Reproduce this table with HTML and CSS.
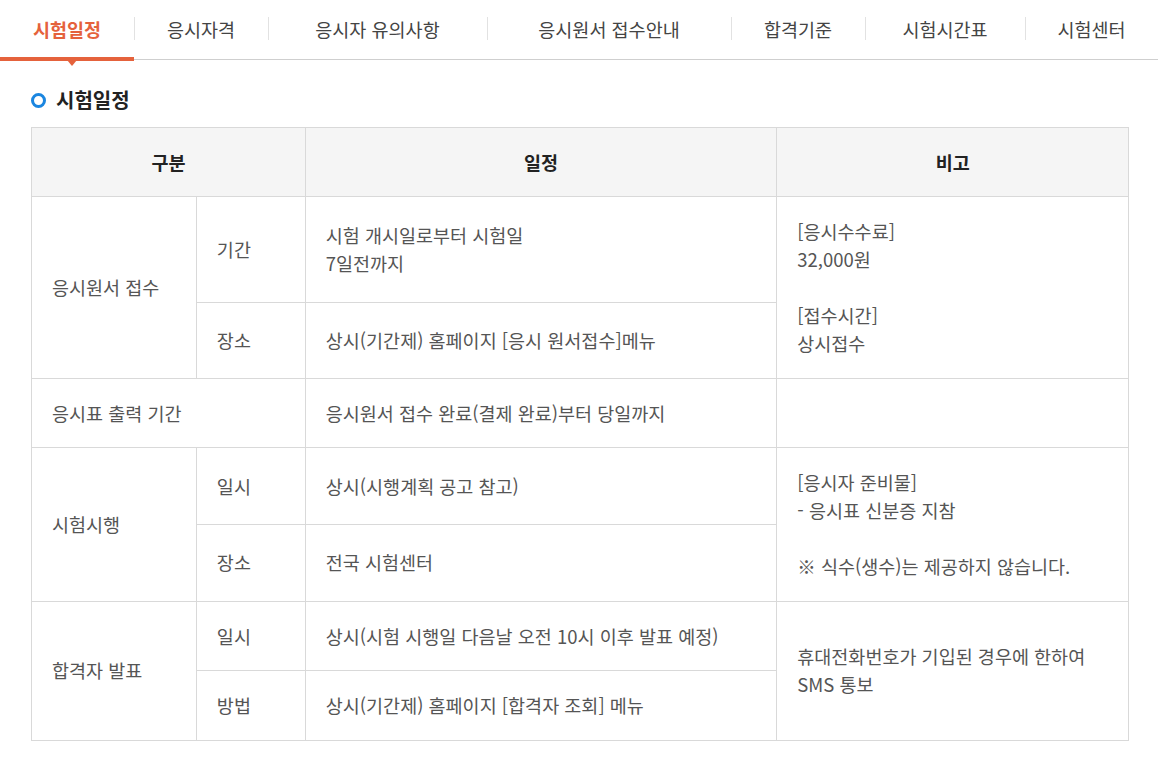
FILE: index.html
```html
<!DOCTYPE html>
<html lang="ko">
<head>
<meta charset="utf-8">
<title>시험일정</title>
<link rel="stylesheet" href="styles.css">
</head>
<body>
<nav class="tabs">
  <a class="tab active">시험일정</a>
  <a class="tab">응시자격</a>
  <a class="tab">응시자 유의사항</a>
  <a class="tab">응시원서 접수안내</a>
  <a class="tab">합격기준</a>
  <a class="tab">시험시간표</a>
  <a class="tab">시험센터</a>
</nav>
<main class="content">
  <h2 class="title"><span class="ring"></span>시험일정</h2>
  <table class="sched">
    <colgroup>
      <col class="c1"><col class="c2"><col class="c3"><col class="c4">
    </colgroup>
    <thead>
      <tr><th colspan="2">구분</th><th>일정</th><th>비고</th></tr>
    </thead>
    <tbody>
      <tr>
        <td rowspan="2">응시원서 접수</td>
        <td>기간</td>
        <td>시험 개시일로부터 시험일<br>7일전까지</td>
        <td rowspan="2">[응시수수료]<br>32,000원<br><br>[접수시간]<br>상시접수</td>
      </tr>
      <tr>
        <td>장소</td>
        <td>상시(기간제) 홈페이지 [응시 원서접수]메뉴</td>
      </tr>
      <tr>
        <td colspan="2">응시표 출력 기간</td>
        <td>응시원서 접수 완료(결제 완료)부터 당일까지</td>
        <td></td>
      </tr>
      <tr>
        <td rowspan="2">시험시행</td>
        <td>일시</td>
        <td>상시(시행계획 공고 참고)</td>
        <td rowspan="2">[응시자 준비물]<br>- 응시표 신분증 지참<br><br>※ 식수(생수)는 제공하지 않습니다.</td>
      </tr>
      <tr>
        <td>장소</td>
        <td>전국 시험센터</td>
      </tr>
      <tr>
        <td rowspan="2">합격자 발표</td>
        <td>일시</td>
        <td>상시(시험 시행일 다음날 오전 10시 이후 발표 예정)</td>
        <td rowspan="2">휴대전화번호가 기입된 경우에 한하여<br>SMS 통보</td>
      </tr>
      <tr>
        <td>방법</td>
        <td>상시(기간제) 홈페이지 [합격자 조회] 메뉴</td>
      </tr>
    </tbody>
  </table>
</main>
</body>
</html>
```

FILE: styles.css
```css
* { box-sizing: border-box; }
html, body { margin: 0; padding: 0; background: #fff; }
body {
  font-family: "Noto Sans CJK KR", "Noto Sans", sans-serif;
  color: #555;
}
.tabs {
  display: grid;
  grid-template-columns: 134px 134px 219px 244px 134px 160px 1fr;
  height: 60px;
  border-bottom: 1px solid #cfcfcf;
}
.tab {
  position: relative;
  display: flex;
  align-items: center;
  justify-content: center;
  font-size: 18.5px;
  color: #444;
  text-decoration: none;
  padding-bottom: 2px;
  background: linear-gradient(#e2e2e2, #e2e2e2) left 17px / 1px 23px no-repeat;
}
.tab:first-child { background: none; }
.tab.active {
  color: #e5623c;
  font-weight: 700;
}
.tab.active::after {
  content: "";
  position: absolute;
  left: 0; right: 0; bottom: -2px;
  height: 4px;
  background: #e5623c;
}
.tab.active::before {
  content: "";
  position: absolute;
  left: 67px; bottom: -7px;
  border-left: 5px solid transparent;
  border-right: 5px solid transparent;
  border-top: 6px solid #e5623c;
}
.content { padding: 0 29px 0 31px; }
.title {
  display: flex;
  align-items: center;
  margin: 26px 0 13px;
  font-size: 20px;
  font-weight: 700;
  color: #222;
  line-height: 28px;
}
.ring {
  width: 15px; height: 15px;
  border: 3px solid #1b86e0;
  border-radius: 50%;
  margin-right: 10px;
}
.sched {
  width: 1098px;
  border-collapse: collapse;
  font-size: 18.5px;
  line-height: 28px;
  border: 1px solid #d9d9d9;
}
.c1 { width: 165px; }
.c2 { width: 109px; }
.c3 { width: 472px; }
.c4 { width: 352px; }
.sched th {
  background: #f5f5f5;
  color: #222;
  font-weight: 700;
  height: 69px;
  border: 1px solid #d9d9d9;
  padding: 0;
}
.sched td {
  border: 1px solid #d9d9d9;
  padding: 20px 20px 20.5px 20px;
  vertical-align: middle;
  text-align: left;
  color: #555;
}
```
